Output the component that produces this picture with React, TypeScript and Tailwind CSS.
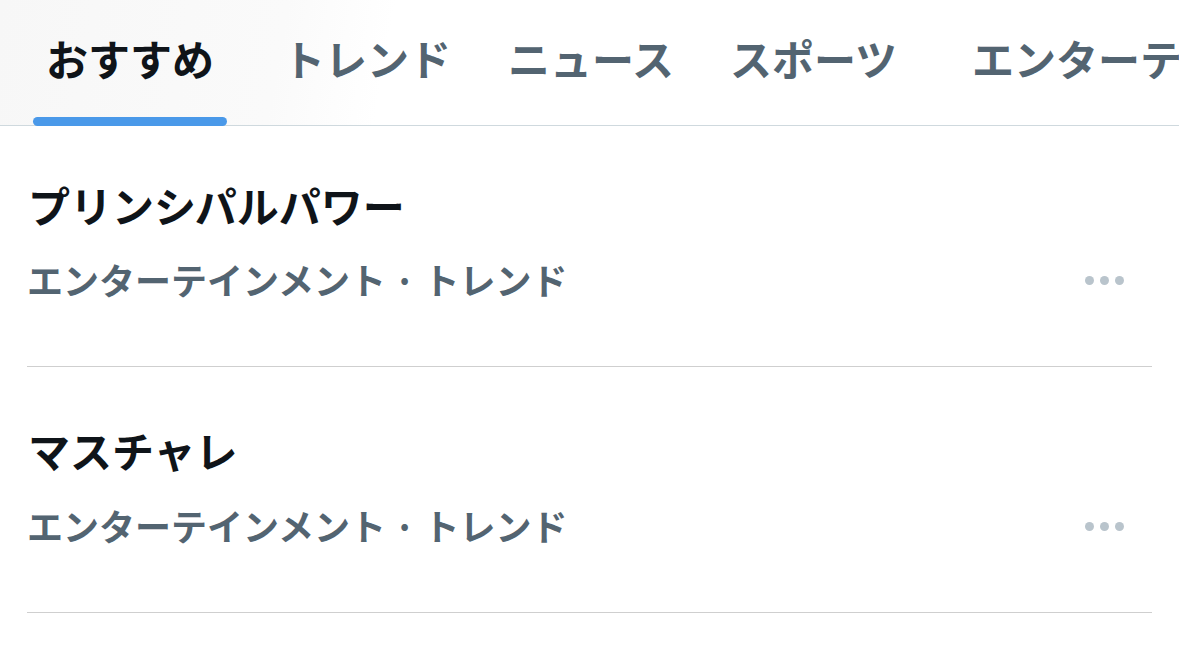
const tabs = [
  { label: "おすすめ", active: true, ml: "ml-[33px]" },
  { label: "トレンド", active: false, ml: "ml-[43px]" },
  { label: "ニュース", active: false, ml: "ml-[31px]" },
  { label: "スポーツ", active: false, ml: "ml-[30px]" },
  { label: "エンターテインメント", active: false, ml: "ml-[49px]" },
];

const trends = [
  { title: "プリンシパルパワー", meta: "エンターテインメント · トレンド", pad: "pt-[58px] pb-[69px]", gap: "mt-[35px]" },
  { title: "マスチャレ", meta: "エンターテインメント · トレンド", pad: "pt-[62px] pb-[69px]", gap: "mt-[36px]" },
];

function MoreDots() {
  return (
    <div className="flex items-center gap-[6px] pr-[1px] pt-[3px]">
      <span className="h-[9px] w-[9px] rounded-full bg-[#b9c4cc]" />
      <span className="h-[9px] w-[9px] rounded-full bg-[#b9c4cc]" />
      <span className="h-[9px] w-[9px] rounded-full bg-[#b9c4cc]" />
    </div>
  );
}

export default function App() {
  return (
    <div
      className="h-[670px] w-[1179px] overflow-hidden bg-white"
      style={{ fontFamily: '"Noto Sans CJK JP", "Noto Sans", sans-serif' }}
    >
      {/* Tab bar */}
      <div className="flex h-[126px] border-b border-[#cfd9de] bg-[linear-gradient(100deg,#f7f7f7_0%,#fafafa_24%,#ffffff_33%)]">
        {tabs.map((t) => (
          <div key={t.label} className={`relative flex shrink-0 flex-col ${t.ml}`}>
            <div
              className={`px-[13px] pt-[37px] text-[42px] font-bold leading-[42px] whitespace-nowrap ${
                t.active ? "text-[#0f1419]" : "text-[#536471]"
              }`}
            >
              {t.label}
            </div>
            {t.active && (
              <div className="absolute bottom-[-1px] left-0 right-0 h-[9px] rounded-full bg-[#4a99e9]" />
            )}
          </div>
        ))}
      </div>

      {/* Trend list */}
      <div className="flex flex-col">
        {trends.map((t) => (
          <div key={t.title} className={`mx-[27px] border-b border-[#cfcfcf] ${t.pad}`}>
            <div className="pl-[1px] text-[42px] font-bold leading-[42px] text-[#0f1419]">{t.title}</div>
            <div className={`${t.gap} flex items-center justify-between`}>
              <div className="text-[36px] font-semibold leading-[36px] text-[#536471]">{t.meta}</div>
              <div className="pr-[27px]">
                <MoreDots />
              </div>
            </div>
          </div>
        ))}
      </div>
    </div>
  );
}
